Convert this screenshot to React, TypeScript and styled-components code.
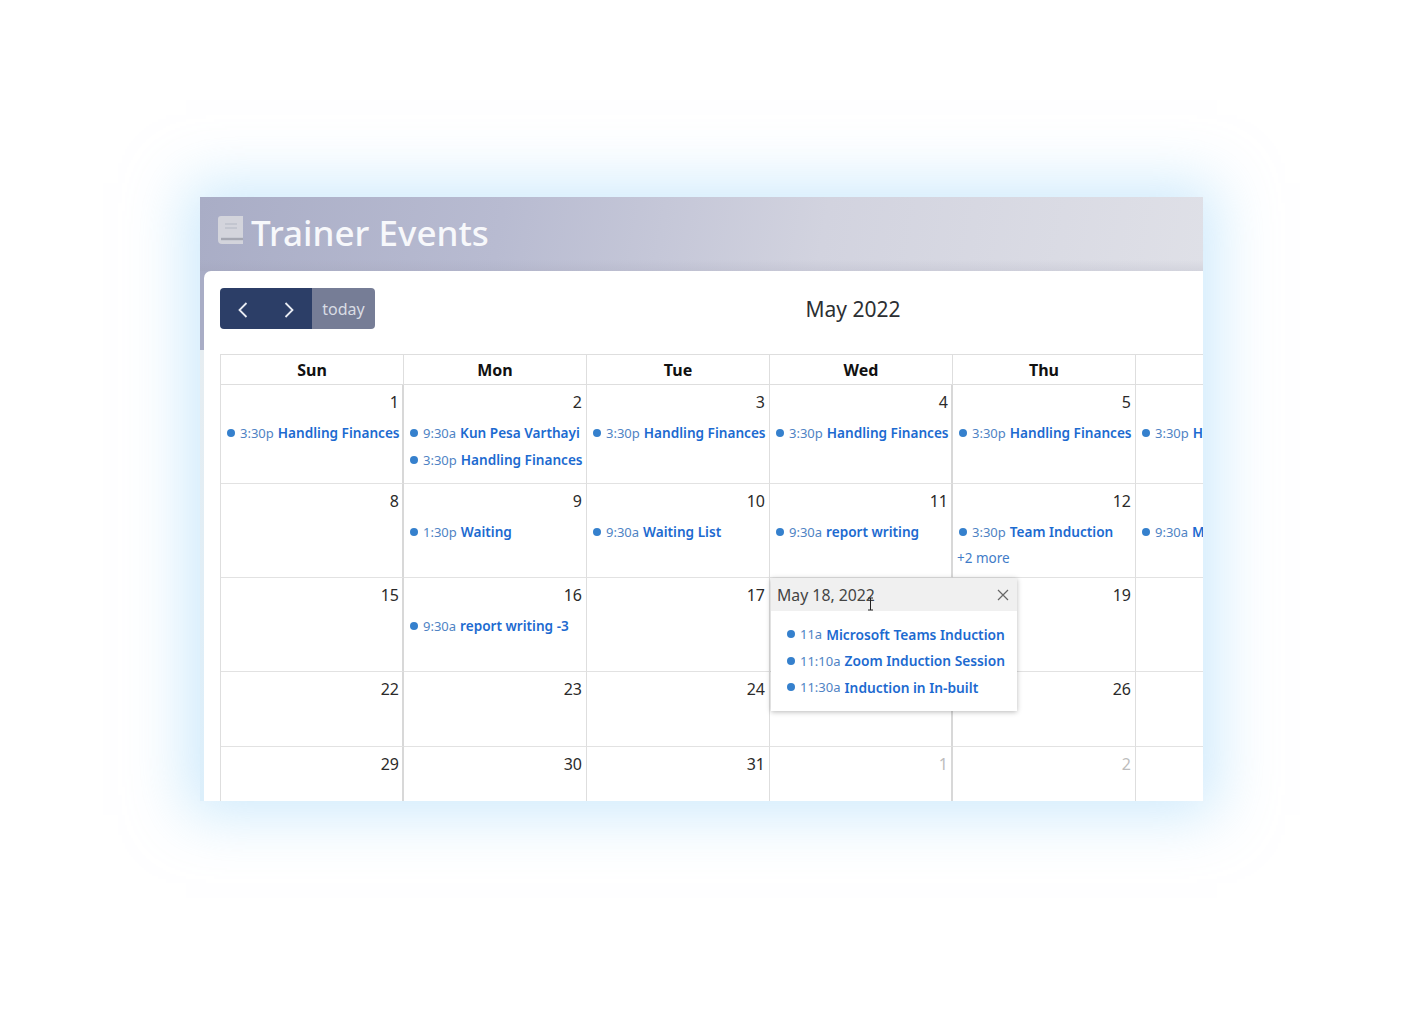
import styled, { createGlobalStyle } from "styled-components";

const GlobalStyle = createGlobalStyle`
  html, body {
    margin: 0;
    padding: 0;
    background: #fff;
    font-family: "Noto Sans", "Open Sans", Arial, sans-serif;
  }
`;

const Page = styled.div`
  width: 1422px;
  height: 1018px;
  padding: 197px 0 0 200px;
  box-sizing: border-box;
  overflow: hidden;
`;

const Frame = styled.div`
  width: 1003px;
  height: 604px;
  background: linear-gradient(to bottom, #a9adc6 153px, #e6edf1 153px, #dceffb 100%);
  box-shadow: 0 0 56px 14px rgba(170, 218, 250, 0.58);
  display: flex;
  flex-direction: column;
`;

const Header = styled.div`
  height: 74px;
  flex: none;
  display: flex;
  align-items: center;
  gap: 8px;
  padding: 0 0 2px 18px;
  box-sizing: border-box;
  background:
    linear-gradient(to bottom, rgba(150, 150, 170, 0) 85%, rgba(150, 150, 170, 0.16) 100%),
    linear-gradient(100deg, #a9adc6 0%, #b8bbd1 30%, #d2d3df 62%, #dfe0e7 100%);
`;

const BookWrap = styled.div`
  display: flex;
  margin-top: -5px;
`;

const Title = styled.h1`
  margin: 0;
  font-size: 35px;
  line-height: 40px;
  font-weight: 500;
  color: #f7f8fb;
`;

const Body = styled.div`
  flex: 1;
  margin-left: 4px;
  padding: 17px 0 0 16px;
  background: #fff;
  border-top-left-radius: 7px;
  overflow: hidden;
  display: flex;
  flex-direction: column;
`;

const Toolbar = styled.div`
  height: 41px;
  flex: none;
  margin-bottom: 25px;
  display: grid;
  grid-template-columns: 155px 1fr;
  align-items: center;
`;

const ButtonGroup = styled.div`
  display: flex;
  height: 41px;
  width: 155px;
  border-radius: 4px;
  overflow: hidden;
`;

const NavButton = styled.button`
  width: 46px;
  border: 0;
  padding: 2px 0 0;
  background: #2c3e67;
  display: flex;
  align-items: center;
  justify-content: center;
`;

const TodayButton = styled.button`
  flex: 1;
  border: 0;
  padding: 0;
  background: #767d96;
  color: #d9dce4;
  font-family: inherit;
  font-size: 16px;
`;

const MonthTitle = styled.h2`
  margin: 0;
  padding-left: 128px;
  text-align: center;
  font-size: 21px;
  font-weight: 400;
  color: #2c2f33;
`;

const CalendarGrid = styled.div`
  position: relative;
  display: grid;
  grid-template-columns: repeat(6, 183px);
  grid-template-rows: 30px 99px 94px 94px 75px 60px;
  width: 1098px;
  border-left: 1px solid #dedede;
  border-top: 1px solid #dedede;
  flex: none;
`;

const DayHead = styled.div`
  border-right: 1px solid #dedede;
  border-bottom: 1px solid #dedede;
  display: flex;
  align-items: center;
  justify-content: center;
  font-size: 16px;
  font-weight: 700;
  color: #111;
`;

const Cell = styled.div<{ $strong?: boolean }>`
  border-right: ${(p) => (p.$strong ? "2px solid #d8d8d8" : "1px solid #dedede")};
  border-bottom: 1px solid #e2e2e2;
  padding: 6px ${(p) => (p.$strong ? "3px" : "4px")} 0 6px;
  min-width: 0;
  overflow: hidden;
`;

const DayNumber = styled.div<{ $muted?: boolean }>`
  text-align: right;
  font-size: 16px;
  line-height: 22px;
  margin-bottom: 6px;
  color: ${(p) => (p.$muted ? "#bdbdbd" : "#2a2a2a")};
`;

const EventRow = styled.div`
  display: flex;
  align-items: center;
  height: 27px;
  white-space: nowrap;
`;

const Dot = styled.span`
  width: 8px;
  height: 8px;
  border-radius: 50%;
  background: #3580cd;
  margin-right: 5px;
  flex: none;
`;

const EventTime = styled.span`
  color: #4f83c4;
  font-size: 13px;
  margin-right: 4px;
`;

const EventName = styled.span<{ $large?: boolean }>`
  color: #1c6ad0;
  font-size: ${(p) => (p.$large ? "13.75px" : "13.6px")};
  font-weight: 600;
`;

const MoreLink = styled.div`
  font-size: 13.5px;
  line-height: 20px;
  margin: 3px 0 0 -2px;
  color: #3f7cc8;
`;

const Popover = styled.div`
  position: absolute;
  left: 550px;
  top: 223px;
  width: 246px;
  height: 133px;
  background: #fff;
  box-shadow: 0 1px 5px rgba(0, 0, 0, 0.28);
`;

const PopoverHead = styled.div`
  height: 33px;
  background: #f0f0f0;
  display: flex;
  align-items: center;
  justify-content: space-between;
  padding: 0 8px 0 6px;
  font-size: 15.8px;
  color: #444;
`;

const PopoverBody = styled.div`
  padding: 10px 8px 0 16px;
`;

const PopoverRow = styled(EventRow)`
  height: 26.5px;
`;

const Cursor = styled.svg`
  position: absolute;
  left: 646px;
  top: 242px;
`;

type CalEvent = { time: string; name: string };
type Day = { n: number; muted?: boolean; hidden?: boolean; events?: CalEvent[]; more?: string };

const hf = (time = "3:30p") => ({ time, name: "Handling Finances" });

const heads = ["Sun", "Mon", "Tue", "Wed", "Thu", ""];

const days: Day[] = [
  { n: 1, events: [hf()] },
  { n: 2, events: [{ time: "9:30a", name: "Kun Pesa Varthayi" }, hf()] },
  { n: 3, events: [hf()] },
  { n: 4, events: [hf()] },
  { n: 5, events: [hf()] },
  { n: 6, events: [hf()] },
  { n: 8 },
  { n: 9, events: [{ time: "1:30p", name: "Waiting" }] },
  { n: 10, events: [{ time: "9:30a", name: "Waiting List" }] },
  { n: 11, events: [{ time: "9:30a", name: "report writing" }] },
  { n: 12, events: [{ time: "3:30p", name: "Team Induction" }], more: "+2 more" },
  { n: 13, events: [{ time: "9:30a", name: "Meeting" }] },
  { n: 15 },
  { n: 16, events: [{ time: "9:30a", name: "report writing -3" }] },
  { n: 17 },
  { n: 18, hidden: true },
  { n: 19 },
  { n: 20 },
  { n: 22 },
  { n: 23 },
  { n: 24 },
  { n: 25, hidden: true },
  { n: 26 },
  { n: 27 },
  { n: 29 },
  { n: 30 },
  { n: 31 },
  { n: 1, muted: true },
  { n: 2, muted: true },
  { n: 3, muted: true },
];

const popoverEvents: CalEvent[] = [
  { time: "11a", name: "Microsoft Teams Induction" },
  { time: "11:10a", name: "Zoom Induction Session" },
  { time: "11:30a", name: "Induction in In-built" },
];

function Chevron({ flip }: { flip?: boolean }) {
  return (
    <svg width="12" height="18" viewBox="0 0 12 18" fill="none">
      <path
        d={flip ? "M2.5 2 L9.5 9 L2.5 16" : "M9.5 2 L2.5 9 L9.5 16"}
        stroke="#e8ebf2"
        strokeWidth="1.8"
      />
    </svg>
  );
}

function BookIcon() {
  return (
    <svg width="25" height="29" viewBox="0 0 25 29">
      <path d="M3 0h22v28H4a4 4 0 0 1-4-4V3a3 3 0 0 1 3-3z" fill="#d3d4dc" />
      <path d="M7 8h12M7 12h12" stroke="#bfc1cc" strokeWidth="1.4" />
      <path d="M3 23h22" stroke="#a5a7b2" strokeWidth="2.4" />
    </svg>
  );
}

function Event({ event }: { event: CalEvent }) {
  return (
    <EventRow>
      <Dot />
      <EventTime>{event.time}</EventTime>
      <EventName>{event.name}</EventName>
    </EventRow>
  );
}

export default function App() {
  return (
    <Page>
      <GlobalStyle />
      <Frame>
        <Header>
          <BookWrap>
            <BookIcon />
          </BookWrap>
          <Title>Trainer Events</Title>
        </Header>
        <Body>
          <Toolbar>
            <ButtonGroup>
              <NavButton aria-label="prev">
                <Chevron />
              </NavButton>
              <NavButton aria-label="next">
                <Chevron flip />
              </NavButton>
              <TodayButton>today</TodayButton>
            </ButtonGroup>
            <MonthTitle>May 2022</MonthTitle>
          </Toolbar>
          <CalendarGrid>
            {heads.map((h, i) => (
              <DayHead key={i}>{h}</DayHead>
            ))}
            {days.map((d, i) => (
              <Cell key={i} $strong={i % 6 === 0 || i % 6 === 3}>
                {!d.hidden && <DayNumber $muted={d.muted}>{d.n}</DayNumber>}
                {d.events?.map((e, j) => (
                  <Event key={j} event={e} />
                ))}
                {d.more && <MoreLink>{d.more}</MoreLink>}
              </Cell>
            ))}
            <Popover>
              <PopoverHead>
                May 18, 2022
                <svg width="12" height="12" viewBox="0 0 12 12">
                  <path d="M1 1l10 10M11 1L1 11" stroke="#666" strokeWidth="1.2" />
                </svg>
              </PopoverHead>
              <PopoverBody>
                {popoverEvents.map((e) => (
                  <PopoverRow key={e.time}>
                    <Dot />
                    <EventTime>{e.time}</EventTime>
                    <EventName $large>{e.name}</EventName>
                  </PopoverRow>
                ))}
              </PopoverBody>
            </Popover>
            <Cursor width="7" height="14" viewBox="0 0 7 14">
              <path d="M1 1h5M3.5 1v12M1 13h5" stroke="#222" strokeWidth="1" fill="none" />
            </Cursor>
          </CalendarGrid>
        </Body>
      </Frame>
    </Page>
  );
}
